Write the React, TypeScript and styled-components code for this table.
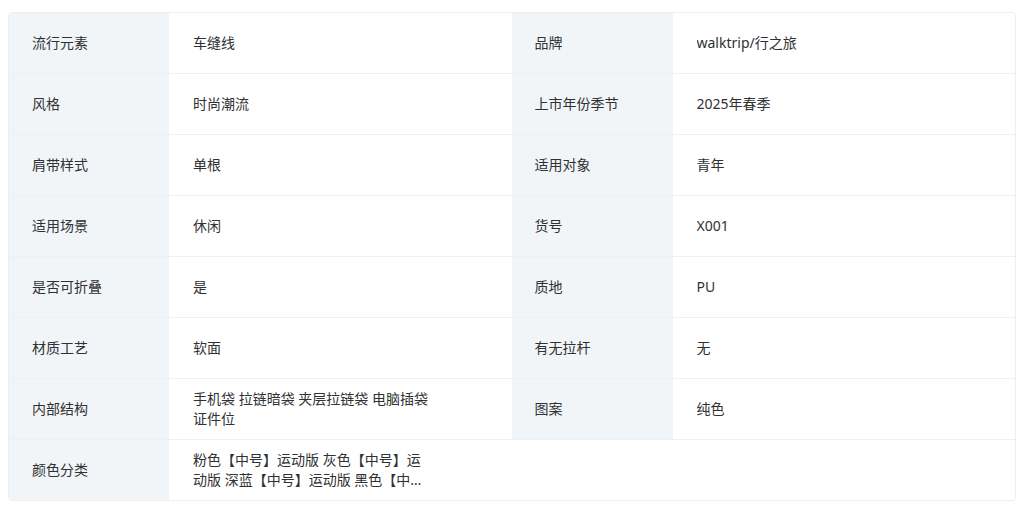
import React from "react";
import styled, { createGlobalStyle } from "styled-components";

const GlobalStyle = createGlobalStyle`
  html, body {
    margin: 0;
    padding: 0;
    background: #ffffff;
  }
  body {
    font-family: "Noto Sans", "Noto Sans CJK SC", sans-serif;
    color: #333333;
  }
`;

const Page = styled.div`
  padding: 12px 8px;
`;

const Table = styled.div`
  display: grid;
  grid-template-columns: 160px 1fr 161px 1fr;
  border: 1px solid #ebeef2;
  border-radius: 4px;
  overflow: hidden;
  background: #ffffff;
`;

const Cell = styled.div<{ $last?: boolean }>`
  display: flex;
  align-items: center;
  box-sizing: border-box;
  height: ${(p) => (p.$last ? "60px" : "61px")};
  padding: 0 24px 0 23px;
  font-size: 14px;
  line-height: 20px;
  color: #303133;
  border-bottom: ${(p) => (p.$last ? "none" : "1px solid #eef0f3")};
`;

const Label = styled(Cell)`
  background: #f2f5f8;
`;

const Value = styled(Cell)`
  background: #ffffff;
  padding-left: 24px;
`;

const ValueText = styled.span`
  max-width: 240px;
  display: -webkit-box;
  -webkit-box-orient: vertical;
  -webkit-line-clamp: 2;
  overflow: hidden;
  word-break: break-all;
`;

const rows: [string, string, string, string][] = [
  ["流行元素", "车缝线", "品牌", "walktrip/行之旅"],
  ["风格", "时尚潮流", "上市年份季节", "2025年春季"],
  ["肩带样式", "单根", "适用对象", "青年"],
  ["适用场景", "休闲", "货号", "X001"],
  ["是否可折叠", "是", "质地", "PU"],
  ["材质工艺", "软面", "有无拉杆", "无"],
  ["内部结构", "手机袋 拉链暗袋 夹层拉链袋 电脑插袋 证件位", "图案", "纯色"],
  [
    "颜色分类",
    "粉色【中号】运动版 灰色【中号】运动版 深蓝【中号】运动版 黑色【中号】运动版",
    "",
    "",
  ],
];

const App = () => {
  return (
    <>
      <GlobalStyle />
      <Page>
        <Table>
          {rows.map(([l1, v1, l2, v2], i) => {
            const last = i === rows.length - 1;
            return (
              <React.Fragment key={l1}>
                <Label $last={last}>{l1}</Label>
                <Value $last={last}>
                  <ValueText>{v1}</ValueText>
                </Value>
                {l2 ? <Label $last={last}>{l2}</Label> : <Value $last={last} />}
                <Value $last={last}>
                  <ValueText>{v2}</ValueText>
                </Value>
              </React.Fragment>
            );
          })}
        </Table>
      </Page>
    </>
  );
};

export default App;
